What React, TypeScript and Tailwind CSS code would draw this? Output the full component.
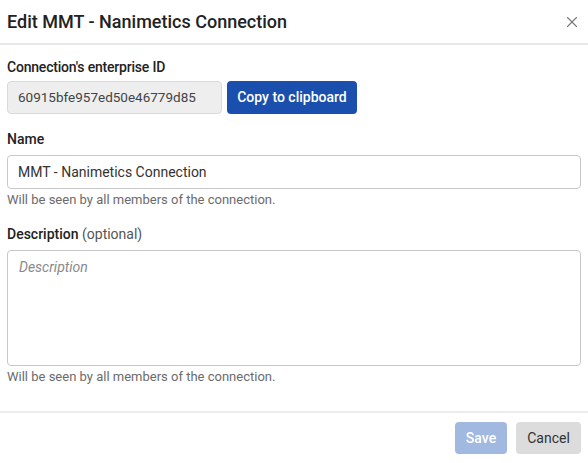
import { X } from 'lucide-react'

// Edit connection dialog

export default function App() {
  return (
    <div className="flex h-[463px] w-[588px] flex-col bg-white font-['Roboto',sans-serif] text-[#333]">
      {/* Header */}
      <div className="flex h-[45px] shrink-0 items-center justify-between border-b-2 border-[#e8e8e8] pl-[7px] pr-[7px]">
        <h1 className="text-[18px] font-medium text-[#222]">Edit MMT - Nanimetics Connection</h1>
        <X size={18} strokeWidth={1.5} className="text-[#777]" />
      </div>

      {/* Body */}
      <div className="flex flex-1 flex-col px-[7px] pt-[12px]">
        <label className="text-[14px] font-medium leading-[20px] tracking-[-0.2px] text-[#222]">Connection's enterprise ID</label>
        <div className="mt-[4px] flex gap-[5px]">
          <div className="flex h-[33px] w-[215px] items-center rounded-[4px] border border-[#dadada] bg-[#eeeeee] px-[10px] text-[13.5px] text-[#444]">
            60915bfe957ed50e46779d85
          </div>
          <button className="h-[33px] w-[130px] rounded-[4px] bg-[#1a4fae] text-[14px] font-medium text-white">
            Copy to clipboard
          </button>
        </div>

        <label className="mt-[15px] text-[14px] font-medium leading-[20px] text-[#222]">Name</label>
        <div className="mt-[6px] flex h-[34px] items-center rounded-[4px] border border-[#c8c8c8] px-[10px] text-[14px] text-[#333]">
          MMT - Nanimetics Connection
        </div>
        <p className="mt-[2px] text-[13px] leading-[18px] text-[#6b6b6b]">Will be seen by all members of the connection.</p>

        <label className="mt-[15px] text-[14px] leading-[20px] text-[#222]">
          <span className="font-medium">Description</span> <span className="text-[#555]">(optional)</span>
        </label>
        <div className="mt-[6px] h-[116px] rounded-[4px] border border-[#c8c8c8] px-[11px] pt-[6px] text-[14px] italic text-[#8a8a8a]">
          Description
        </div>
        <p className="mt-[2px] text-[13px] leading-[18px] text-[#6b6b6b]">Will be seen by all members of the connection.</p>
      </div>

      {/* Footer */}
      <div className="flex h-[52px] shrink-0 items-center justify-end gap-[9px] border-t-2 border-[#ececec] pr-[7px]">
        <button className="h-[32px] w-[52px] rounded-[4px] bg-[#a1b8e0] text-[14px] font-medium text-white">Save</button>
        <button className="h-[32px] w-[65px] rounded-[4px] bg-[#dcdcdc] text-[14px] text-[#333]">Cancel</button>
      </div>
    </div>
  )
}
